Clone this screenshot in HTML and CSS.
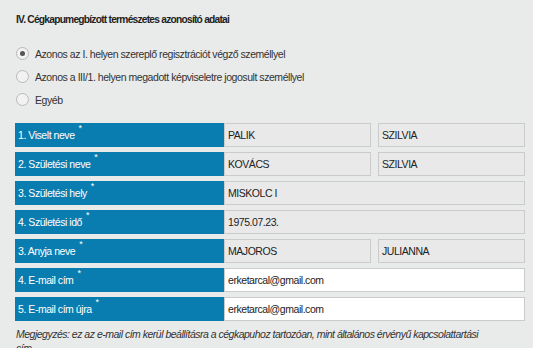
FILE: index.html
```html
<!DOCTYPE html>
<html lang="hu">
  <head>
    <meta charset="UTF-8" />
    <title>Cégkapumegbízott adatai</title>
    <link rel="stylesheet" href="styles.css">
  </head>
  <body>
    <div class="panel">
      <p class="title">IV. Cégkapumegbízott természetes azonosító adatai</p>

      <ul class="radios">
        <li class="radio-row">
          <span class="radio checked"></span>
          <label>Azonos az I. helyen szereplő regisztrációt végző személlyel</label>
        </li>
        <li class="radio-row">
          <span class="radio"></span>
          <label>Azonos a III/1. helyen megadott képviseletre jogosult személlyel</label>
        </li>
        <li class="radio-row">
          <span class="radio"></span>
          <label>Egyéb</label>
        </li>
      </ul>

      <div class="fields">
        <div class="field-row">
          <div class="field-label">1. Viselt neve <sup>*</sup></div>
          <div class="values">
            <div class="value">PALIK</div>
            <div class="value">SZILVIA</div>
          </div>
        </div>
        <div class="field-row">
          <div class="field-label">2. Születési neve <sup>*</sup></div>
          <div class="values">
            <div class="value">KOVÁCS</div>
            <div class="value">SZILVIA</div>
          </div>
        </div>
        <div class="field-row">
          <div class="field-label">3. Születési hely <sup>*</sup></div>
          <div class="values">
            <div class="value">MISKOLC I</div>
          </div>
        </div>
        <div class="field-row">
          <div class="field-label">4. Születési idő <sup>*</sup></div>
          <div class="values">
            <div class="value">1975.07.23.</div>
          </div>
        </div>
        <div class="field-row">
          <div class="field-label">3. Anyja neve <sup>*</sup></div>
          <div class="values">
            <div class="value">MAJOROS</div>
            <div class="value">JULIANNA</div>
          </div>
        </div>
        <div class="field-row">
          <div class="field-label">4. E-mail cím <sup>*</sup></div>
          <div class="values">
            <div class="value editable">erketarcal@gmail.com</div>
          </div>
        </div>
        <div class="field-row">
          <div class="field-label">5. E-mail cím újra <sup>*</sup></div>
          <div class="values">
            <div class="value editable">erketarcal@gmail.com</div>
          </div>
        </div>
      </div>

      <p class="note">Megjegyzés: ez az e-mail cím kerül beállításra a cégkapuhoz tartozóan, mint általános érvényű kapcsolattartási cím</p>
    </div>
  </body>
</html>
```

FILE: styles.css
```css
body {
  margin: 0;
  background: #ffffff;
  font-family: "Liberation Sans", Arial, sans-serif;
  font-size: 10.5px;
  letter-spacing: -0.45px;
  color: #333333;
}

/* Grey form panel */
.panel {
  width: 533px;
  height: 348px;
  box-sizing: border-box;
  padding: 13px 8px 0 15px;
  background: #e9eaea;
  overflow: hidden;
}

.title {
  margin: 0 0 0 1px;
  line-height: 14px;
  font-size: 10.2px;
  font-weight: bold;
  letter-spacing: -0.75px;
  color: #222222;
}

.radios {
  list-style: none;
  margin: 15px 0 12px;
  padding: 0;
}

.radio-row {
  display: flex;
  align-items: center;
  height: 23px;
}

.radio {
  width: 11px;
  height: 11px;
  margin-left: 1px;
  border: 1px solid #b8b8b8;
  border-radius: 50%;
  background: #f2f2f2;
  display: flex;
  align-items: center;
  justify-content: center;
}

.radio.checked::after {
  content: "";
  width: 5px;
  height: 5px;
  border-radius: 50%;
  background: #555555;
}

.radio-row label {
  margin-left: 6px;
  color: #333333;
}

/* Data rows */
.fields {
  display: flex;
  flex-direction: column;
  gap: 5px;
  width: 510px;
}

.field-row {
  display: flex;
  height: 24px;
}

.field-label {
  width: 209px;
  flex: none;
  box-sizing: border-box;
  padding-left: 3px;
  display: flex;
  align-items: center;
  background: #0a7db0;
  color: #ffffff;
}

.field-label sup {
  font-size: 9px;
  line-height: 0;
  margin-left: 4px;
  align-self: flex-start;
  margin-top: 5px;
}

.values {
  flex: 1;
  display: flex;
  gap: 7px;
}

.value {
  flex: 1;
  box-sizing: border-box;
  border: 1px solid #cbcbcb;
  background: #e9e9e9;
  padding-left: 3px;
  display: flex;
  align-items: center;
  color: #222222;
}

.value.editable {
  background: #ffffff;
}

.note {
  width: 475px;
  margin: 6px 0 0 1px;
  line-height: 14px;
  font-style: italic;
  letter-spacing: -0.5px;
  color: #333333;
}
```
